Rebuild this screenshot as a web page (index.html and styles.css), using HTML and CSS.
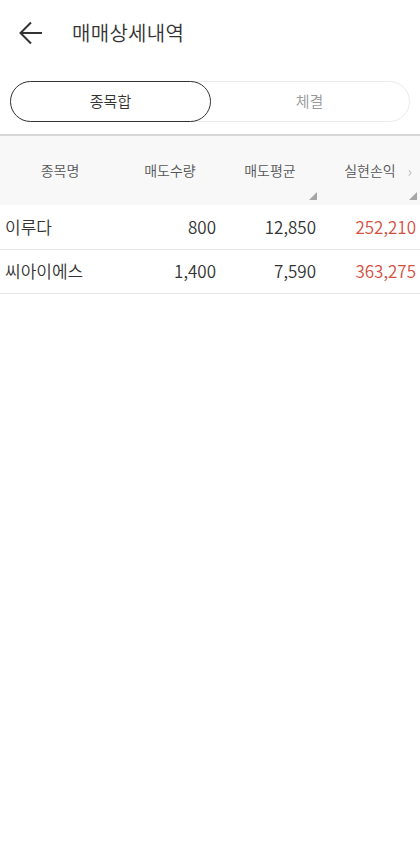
FILE: index.html
```html
<!DOCTYPE html>
<html lang="ko">
  <head>
    <meta charset="UTF-8" />
    <meta name="viewport" content="width=device-width, initial-scale=1.0" />
    <title>매매상세내역</title>
    <link rel="stylesheet" href="styles.css">
  </head>
  <body>
    <header class="topbar">
      <button class="back" aria-label="뒤로">
        <svg width="24" height="24" viewBox="0 0 24 24" fill="none" stroke="#333" stroke-width="2">
          <path d="M23 12H2M12 1.5L1.5 12 12 22.5" />
        </svg>
      </button>
      <h1>매매상세내역</h1>
    </header>

    <nav class="tabs">
      <button class="tab active">종목합</button>
      <button class="tab">체결</button>
    </nav>

    <table class="trades">
      <thead>
        <tr>
          <th>종목명</th>
          <th>매도수량</th>
          <th class="sort">매도평균</th>
          <th class="sort more">실현손익</th>
        </tr>
      </thead>
      <tbody>
        <tr>
          <td>이루다</td>
          <td>800</td>
          <td>12,850</td>
          <td class="up">252,210</td>
        </tr>
        <tr>
          <td>씨아이에스</td>
          <td>1,400</td>
          <td>7,590</td>
          <td class="up">363,275</td>
        </tr>
      </tbody>
    </table>
  </body>
</html>
```

FILE: styles.css
```css
* {
  box-sizing: border-box;
}

body {
  margin: 0;
  font-family: "Noto Sans CJK KR", "Noto Sans", sans-serif;
  color: #333;
  background: #fff;
}

.topbar {
  display: flex;
  align-items: center;
  height: 66px;
  padding: 0 0 0 19px;
}

.back {
  display: flex;
  padding: 0;
  border: 0;
  background: none;
}

h1 {
  margin: 0 0 2px 29px;
  font-size: 20px;
  font-weight: 350;
  letter-spacing: 0.3px;
}

.tabs {
  display: flex;
  margin: 15px 10px 0;
  height: 41px;
  border: 1px solid #ebebeb;
  border-radius: 21px;
}

.tab {
  flex: 1;
  margin: -1px;
  padding: 0 0 2px;
  border: 1px solid transparent;
  border-radius: 21px;
  background: none;
  font: inherit;
  font-size: 15px;
  font-weight: 350;
  color: #999;
}

.tab.active {
  border: 1.5px solid #333;
  color: #333;
}

.trades {
  width: 100%;
  margin-top: 12px;
  border-collapse: collapse;
  border-top: 2px solid #d6d6d6;
  table-layout: fixed;
}

.trades th:first-child,
.trades td:first-child {
  width: 120px;
}

th {
  position: relative;
  height: 70px;
  padding: 0 0 2px;
  background: #f8f8f8;
  font-size: 14px;
  font-weight: 350;
  color: #555;
  text-align: center;
}

th.sort::after {
  content: "";
  position: absolute;
  right: 3px;
  bottom: 5px;
  border-style: solid;
  border-width: 0 0 8px 8px;
  border-color: transparent transparent #a6a6a6 transparent;
}

th.more::before {
  content: "›";
  position: absolute;
  right: 8px;
  top: 24px;
  font-size: 15px;
  color: #bbb;
}

td {
  height: 44px;
  padding: 0 4px 1px;
  border-bottom: 1px solid #e6e6e6;
  font-size: 17px;
  font-weight: 350;
  text-align: right;
}

td:first-child {
  padding-left: 5px;
  text-align: left;
}

td.up {
  color: #d4503f;
}
```
